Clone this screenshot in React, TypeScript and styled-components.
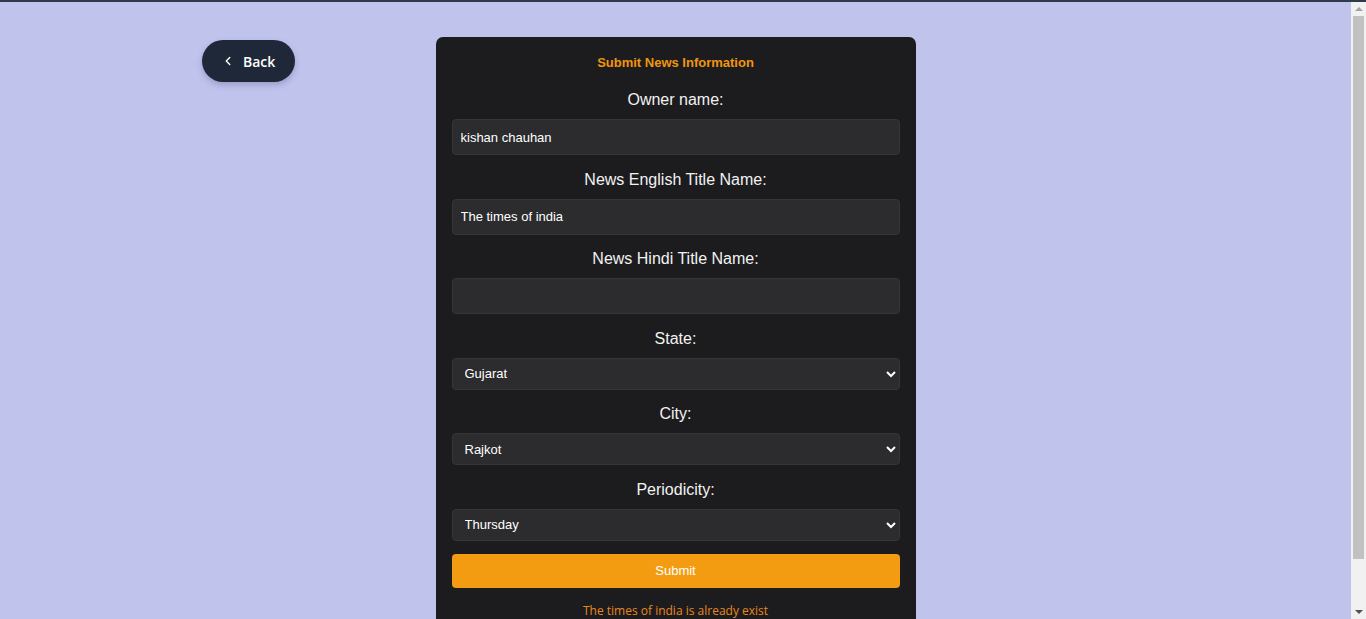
import React from "react";
import styled, { createGlobalStyle } from "styled-components";

const GlobalStyle = createGlobalStyle`
  html, body { margin: 0; padding: 0; }
  body {
    background: #c0c4ed;
    font-family: "Liberation Sans", Arial, sans-serif;
    border-top: 2px solid #2f3a4d;
  }
  * { box-sizing: border-box; }
`;

const Page = styled.div`
  display: grid;
  grid-template-columns: 1fr 480px 1fr;
  align-items: start;
  min-height: 670px;
  padding-right: 15px;
`;

const BackCol = styled.div`
  padding-left: 202px;
  padding-top: 38px;
`;

const BackButton = styled.button`
  display: flex;
  align-items: center;
  gap: 8px;
  height: 42px;
  width: 93px;
  padding: 0 0 0 19px;
  border: none;
  border-radius: 21px;
  background: #1f2839;
  color: #ffffff;
  font-family: "Open Sans", "Noto Sans", sans-serif;
  font-weight: 600;
  font-size: 14px;
  box-shadow: 0 3px 6px rgba(40, 40, 90, 0.25);
  cursor: pointer;
`;

const Card = styled.form`
  margin-top: 35px;
  background: #1c1c1e;
  border-radius: 7px;
  padding: 18px 16px 24px;
  display: flex;
  flex-direction: column;
`;

const Title = styled.h2`
  margin: 0 0 20px;
  text-align: center;
  color: #f0960f;
  font-size: 13px;
  font-weight: 700;
`;

const Label = styled.label`
  display: block;
  text-align: center;
  color: #f2f2f2;
  font-size: 16px;
  line-height: 20px;
  margin-bottom: 9px;
`;

const Field = styled.div`
  margin-bottom: 14.5px;
`;

const TextInput = styled.input`
  display: block;
  width: 100%;
  height: 36px;
  padding: 0 8px;
  background: #2c2c2e;
  border: 1px solid #363638;
  border-radius: 4px;
  color: #ffffff;
  font-family: "Liberation Sans", Arial, sans-serif;
  font-size: 13px;
  outline: none;
`;

const Select = styled.select`
  display: block;
  width: 100%;
  height: 32px;
  padding: 0 8px;
  background: #2c2c2e;
  border: 1px solid #363638;
  border-radius: 4px;
  color: #ffffff;
  font-family: "Liberation Sans", Arial, sans-serif;
  font-size: 13px;
  outline: none;
  color-scheme: dark;
`;

const SubmitButton = styled.button`
  margin-top: -1.5px;
  height: 34px;
  width: 100%;
  border: none;
  border-radius: 4px;
  background: #f39c12;
  color: #ffffff;
  font-family: "Liberation Sans", Arial, sans-serif;
  font-size: 13px;
  cursor: pointer;
`;

const ErrorText = styled.p`
  margin: 14px 0 0;
  text-align: center;
  color: #e8871e;
  font-family: "Open Sans", "Noto Sans", sans-serif;
  font-size: 12px;
`;

const ScrollTrack = styled.div`
  position: fixed;
  top: 2px;
  right: 0;
  bottom: 0;
  width: 15px;
  background: #f1f1f1;
  display: flex;
  flex-direction: column;
  align-items: center;
`;

const ScrollArrow = styled.div<{ $down?: boolean }>`
  width: 0;
  height: 0;
  margin: 5px 0;
  border-left: 4px solid transparent;
  border-right: 4px solid transparent;
  ${(p) =>
    p.$down
      ? "border-top: 4px solid #505050; margin-top: auto;"
      : "border-bottom: 4px solid #a3a3a3;"}
`;

const ScrollThumb = styled.div`
  width: 11px;
  height: 543px;
  background: #c1c1c1;
`;

const ChevronLeft = () => (
  <svg width="14" height="14" viewBox="0 0 24 24" fill="none" stroke="currentColor" strokeWidth="2.4" strokeLinecap="round" strokeLinejoin="round">
    <path d="M15 18l-6-6 6-6" />
  </svg>
);

export default function App() {
  return (
    <>
      <GlobalStyle />
      <Page>
        <BackCol>
          <BackButton type="button">
            <ChevronLeft />
            <span>Back</span>
          </BackButton>
        </BackCol>
        <Card onSubmit={(e) => e.preventDefault()}>
          <Title>Submit News Information</Title>
          <Field>
            <Label>Owner name:</Label>
            <TextInput defaultValue="kishan chauhan" />
          </Field>
          <Field>
            <Label>News English Title Name:</Label>
            <TextInput defaultValue="The times of india" />
          </Field>
          <Field>
            <Label>News Hindi Title Name:</Label>
            <TextInput defaultValue="" />
          </Field>
          <Field>
            <Label>State:</Label>
            <Select defaultValue="Gujarat">
              <option>Gujarat</option>
              <option>Maharashtra</option>
            </Select>
          </Field>
          <Field>
            <Label>City:</Label>
            <Select defaultValue="Rajkot">
              <option>Rajkot</option>
              <option>Ahmedabad</option>
            </Select>
          </Field>
          <Field>
            <Label>Periodicity:</Label>
            <Select defaultValue="Thursday">
              <option>Monday</option>
              <option>Thursday</option>
            </Select>
          </Field>
          <SubmitButton type="submit">Submit</SubmitButton>
          <ErrorText>The times of india is already exist</ErrorText>
        </Card>
        <div />
      </Page>
      <ScrollTrack aria-hidden>
        <ScrollArrow />
        <ScrollThumb />
        <ScrollArrow $down />
      </ScrollTrack>
    </>
  );
}
